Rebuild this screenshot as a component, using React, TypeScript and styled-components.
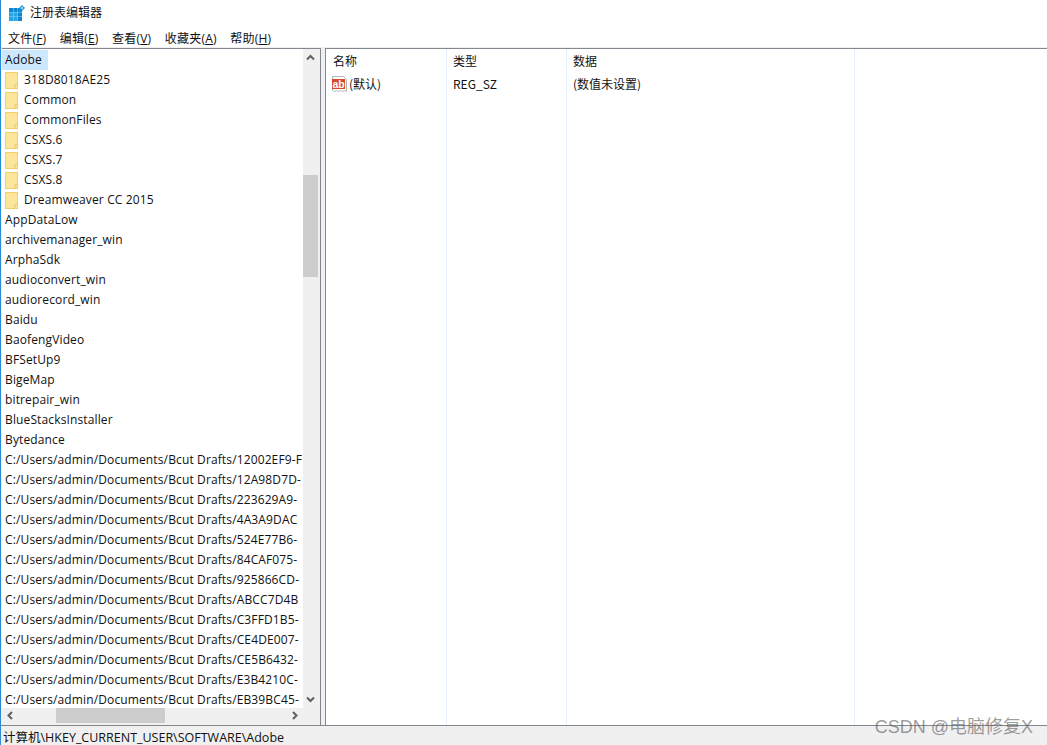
import styled, { createGlobalStyle } from 'styled-components'

const folders = ['318D8018AE25', 'Common', 'CommonFiles', 'CSXS.6', 'CSXS.7', 'CSXS.8', 'Dreamweaver CC 2015']

const keys = [
  'AppDataLow',
  'archivemanager_win',
  'ArphaSdk',
  'audioconvert_win',
  'audiorecord_win',
  'Baidu',
  'BaofengVideo',
  'BFSetUp9',
  'BigeMap',
  'bitrepair_win',
  'BlueStacksInstaller',
  'Bytedance',
]

const draftBase = 'C:/Users/admin/Documents/Bcut Drafts/'
const drafts = [
  '12002EF9-F',
  '12A98D7D-',
  '223629A9-',
  '4A3A9DAC',
  '524E77B6-',
  '84CAF075-',
  '925866CD-',
  'ABCC7D4B',
  'C3FFD1B5-',
  'CE4DE007-',
  'CE5B6432-',
  'E3B4210C-',
  'EB39BC45-',
]

const menus = [
  { label: '文件', key: 'F' },
  { label: '编辑', key: 'E' },
  { label: '查看', key: 'V' },
  { label: '收藏夹', key: 'A' },
  { label: '帮助', key: 'H' },
]

function AppIcon() {
  return (
    <svg width="17" height="16" viewBox="0 0 17 16">
      <rect x="0" y="3" width="13" height="13" fill="#8fd8f5" />
      <path d="M0 3h4v4H0zM4.500 3h4v4h-4zM9 3h4v4H9z" fill="#0f86cf" />
      <path d="M0 7.500h4v4H0zM4.500 7.500h4v4h-4zM0 12h4v4H0zM4.500 12h4v4h-4z" fill="#27a4e4" />
      <path d="M9 7.500h4v4H9zM9 12h4v4H9z" fill="#0f86cf" />
      <path d="M13 0l3 3-3 3-3-3z" fill="#2f9ad6" />
      <circle cx="13" cy="3" r="1" fill="#bfe6f8" />
    </svg>
  )
}

function FolderIcon() {
  return (
    <svg width="13" height="17" viewBox="0 0 13 17">
      <rect x="0.500" y="0.500" width="12" height="16" fill="#fde59a" stroke="#f0cf6a" />
      <path d="M10 16.500v-4h2.500" fill="none" stroke="#eccb68" />
    </svg>
  )
}

function StringIcon() {
  return (
    <svg width="17" height="18" viewBox="0 0 17 18">
      <path d="M1.500 1.500h11l3 3v12l-2-1-2 1-2-1-2 1-2-1-2 1-2-1z" fill="#fff" stroke="#b5b5b5" />
      <rect x="1" y="4" width="13" height="10" fill="#d8492a" />
      <text x="1.500" y="12.500" fontFamily="'Liberation Sans', sans-serif" fontSize="10.500" fontWeight="700" fill="#fff">ab</text>
    </svg>
  )
}

function Arrow({ d }: { d: string }) {
  return (
    <svg width="9" height="9" viewBox="0 0 9 9">
      <path d={d} fill="none" stroke="#606060" strokeWidth="2" />
    </svg>
  )
}

export default function App() {
  return (
    <>
      <GlobalStyle />
      <Window>
        <TitleBar>
          <TitleIcon>
            <AppIcon />
          </TitleIcon>
          <TitleText>注册表编辑器</TitleText>
        </TitleBar>
        <MenuBar>
          {menus.map(m => (
            <MenuItem key={m.key}>
              {m.label}(<u>{m.key}</u>)
            </MenuItem>
          ))}
        </MenuBar>
        <Panes>
          <TreePane>
            <TreeMain>
              <TreeList>
                <SelectedRow>Adobe</SelectedRow>
                {folders.map(f => (
                  <FolderRow key={f}>
                    <FolderIcon />
                    <FolderLabel>{f}</FolderLabel>
                  </FolderRow>
                ))}
                {keys.map(k => (
                  <KeyRow key={k}>{k}</KeyRow>
                ))}
                {drafts.map(d => (
                  <KeyRow key={d}>{draftBase + d}</KeyRow>
                ))}
              </TreeList>
              <VTrack>
                <VArrow>
                  <Arrow d="M1 6.500l3.500-3.500 3.500 3.500" />
                </VArrow>
                <VThumbSlot>
                  <VThumb />
                </VThumbSlot>
                <VArrow>
                  <Arrow d="M1 2.500l3.500 3.500 3.500-3.500" />
                </VArrow>
              </VTrack>
            </TreeMain>
            <HTrack>
              <HArrow>
                <Arrow d="M6 1l-3.500 3.500 3.500 3.500" />
              </HArrow>
              <HThumbSlot>
                <HThumb />
              </HThumbSlot>
              <HArrow>
                <Arrow d="M3 1l3.500 3.500-3.500 3.500" />
              </HArrow>
              <Corner />
            </HTrack>
          </TreePane>
          <ListPane>
            <HeaderRow>
              <NameCol>名称</NameCol>
              <TypeCol>类型</TypeCol>
              <DataCol>数据</DataCol>
            </HeaderRow>
            <ValueRow>
              <NameCol $first>
                <ValueIcon>
                  <StringIcon />
                </ValueIcon>
                <span>(默认)</span>
              </NameCol>
              <TypeCol>REG_SZ</TypeCol>
              <DataCol>(数值未设置)</DataCol>
            </ValueRow>
          </ListPane>
        </Panes>
        <StatusBar>计算机\HKEY_CURRENT_USER\SOFTWARE\Adobe</StatusBar>
        <Watermark>CSDN @电脑修复X</Watermark>
      </Window>
    </>
  )
}

const GlobalStyle = createGlobalStyle`
  html, body {
    margin: 0;
    padding: 0;
    background: #fff;
  }
`

const Window = styled.div`
  position: relative;
  width: 1047px;
  height: 745px;
  overflow: hidden;
  display: flex;
  flex-direction: column;
  box-sizing: border-box;
  border-left: 1px solid #2b8ad6;
  background: #f0f0f0;
  font-family: 'Open Sans', 'Noto Sans CJK SC', sans-serif;
  font-size: 12px;
  color: #111;
`

const TitleBar = styled.div`
  height: 24px;
  flex: none;
  display: flex;
  align-items: center;
  gap: 4px;
  padding-left: 8px;
  background: #fff;
`

const TitleIcon = styled.div`
  display: flex;
  margin-top: 2px;
`

const TitleText = styled.span`
  margin-top: -2px;
  font-family: 'Noto Sans CJK SC', sans-serif;
  font-size: 12px;
`

const MenuBar = styled.div`
  height: 23px;
  flex: none;
  box-sizing: border-box;
  display: flex;
  align-items: center;
  gap: 13.500px;
  padding: 5px 0 0 7px;
  background: #fff;
`

const MenuItem = styled.span`
  font-family: 'Open Sans', 'Noto Sans CJK SC', sans-serif;
  font-size: 12px;
  letter-spacing: 0.2px;
`

const Panes = styled.div`
  height: 677px;
  flex: none;
  margin-top: 1px;
  display: flex;
  gap: 4px;
  padding-left: 1px;
`

const TreePane = styled.div`
  width: 319px;
  box-sizing: border-box;
  display: flex;
  flex-direction: column;
  border: 1px solid #828790;
  border-left: 0;
  border-bottom: 0;
  background: #fff;
`

const TreeMain = styled.div`
  flex: 1;
  min-height: 0;
  display: flex;
`

const TreeList = styled.div`
  flex: 1;
  min-width: 0;
  overflow: hidden;
  letter-spacing: 0.13px;
`

const SelectedRow = styled.div`
  width: 46px;
  height: 20px;
  line-height: 19px;
  margin-top: 1px;
  padding-left: 3px;
  box-sizing: border-box;
  background: #cce8ff;
`

const FolderRow = styled.div`
  height: 20px;
  display: flex;
  align-items: center;
  gap: 6px;
  padding-left: 3px;
  white-space: nowrap;
`

const FolderLabel = styled.span`
  line-height: 20px;
`

const KeyRow = styled.div`
  height: 20px;
  line-height: 19px;
  padding-left: 3px;
  white-space: nowrap;
`

const VTrack = styled.div`
  width: 17px;
  flex: none;
  display: flex;
  flex-direction: column;
  background: #f0f0f0;
`

const VArrow = styled.div`
  height: 17px;
  flex: none;
  display: flex;
  align-items: center;
  justify-content: center;
  padding-right: 2px;
`

const VThumbSlot = styled.div`
  flex: 1;
  padding-top: 109px;
`

const VThumb = styled.div`
  width: 15px;
  height: 102px;
  background: #cdcdcd;
`

const HTrack = styled.div`
  height: 17px;
  flex: none;
  display: flex;
  background: #f0f0f0;
`

const HArrow = styled.div`
  width: 17px;
  height: 15px;
  flex: none;
  display: flex;
  align-items: center;
  justify-content: center;
`

const HThumbSlot = styled.div`
  flex: 1;
  padding-left: 37px;
`

const HThumb = styled.div`
  width: 109px;
  height: 15px;
  background: #cdcdcd;
`

const Corner = styled.div`
  width: 17px;
  flex: none;
`

const ListPane = styled.div`
  flex: 1;
  box-sizing: border-box;
  border: 1px solid #828790;
  border-right: 0;
  border-bottom: 0;
  background: #fff;
  background-image: linear-gradient(#e5eefb, #e5eefb), linear-gradient(#e5eefb, #e5eefb), linear-gradient(#e5eefb, #e5eefb);
  background-size: 1px 100%;
  background-repeat: no-repeat;
  background-position: 120px 0, 240px 0, 528px 0;
`

const HeaderRow = styled.div`
  display: flex;
  height: 22px;
  align-items: center;
  font-family: 'Noto Sans CJK SC', sans-serif;
`

const ValueRow = styled.div`
  display: flex;
  height: 24px;
  align-items: center;
  font-family: 'Noto Sans CJK SC', sans-serif;
`

const NameCol = styled.div<{ $first?: boolean }>`
  width: 120px;
  box-sizing: border-box;
  padding-left: ${p => (p.$first ? '5px' : '7px')};
  display: flex;
  align-items: center;
  gap: 1px;
`

const ValueIcon = styled.span`
  display: flex;
  margin-top: 2px;
`

const TypeCol = styled.div`
  width: 120px;
  box-sizing: border-box;
  padding-left: 7px;
`

const DataCol = styled.div`
  width: 288px;
  box-sizing: border-box;
  padding-left: 7px;
`

const StatusBar = styled.div`
  flex: 1;
  min-height: 0;
  display: flex;
  align-items: center;
  padding: 1px 0 0 2px;
  border-top: 1px solid #828790;
  font-size: 12.500px;
  font-family: 'Open Sans', 'Noto Sans CJK SC', sans-serif;
`

const Watermark = styled.div`
  position: absolute;
  right: 14px;
  bottom: 7px;
  font-family: 'Liberation Sans', 'Noto Sans CJK SC', sans-serif;
  font-size: 18px;
  color: rgba(90, 90, 90, 0.6);
`
